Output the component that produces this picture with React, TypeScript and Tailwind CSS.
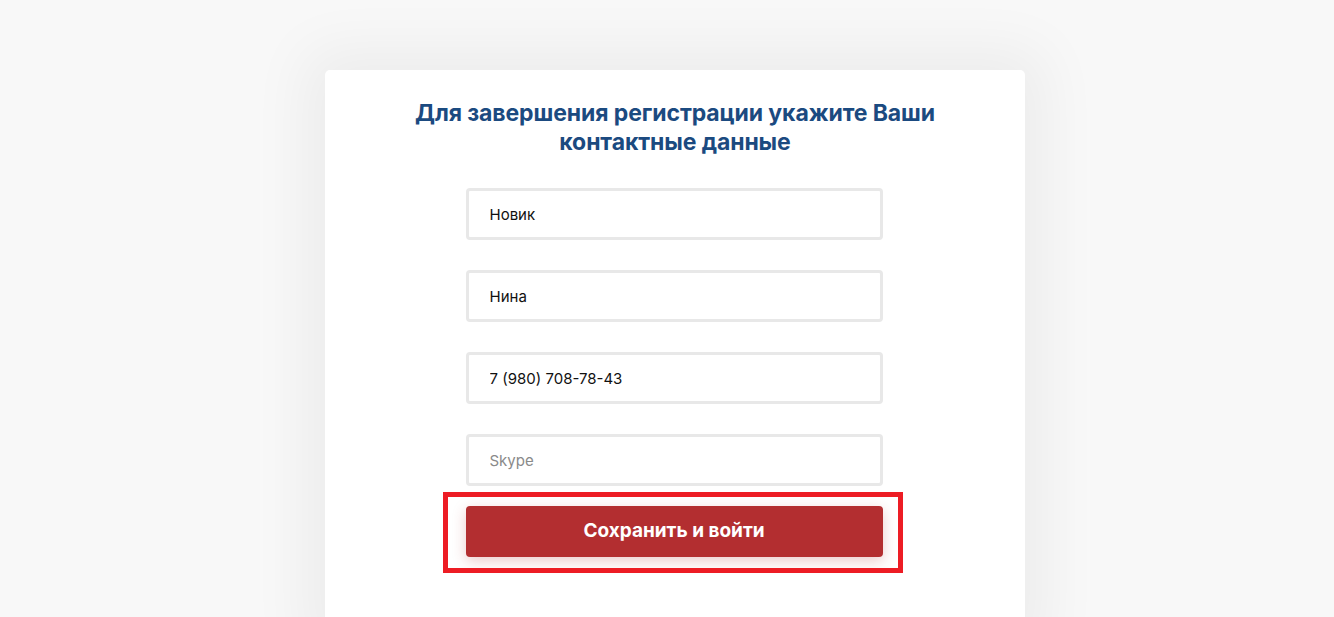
export default function App() {
  const fields = [
    { value: "Новик", placeholder: "Фамилия" },
    { value: "Нина", placeholder: "Имя" },
    { value: "7 (980) 708-78-43", placeholder: "Телефон" },
    { value: "", placeholder: "Skype" },
  ];

  return (
    <div className="flex min-h-screen justify-center bg-[#f8f8f8] pl-[16px] pt-[70px] font-['Inter','Open_Sans',sans-serif]">
      <div className="h-[570px] w-[700px] rounded-[5px] bg-white pt-[29px] shadow-[0_0_60px_20px_rgba(0,0,0,0.05)]">
        <h1 className="mx-auto w-[580px] text-center text-[23px] font-bold leading-[29px] tracking-[-0.1px] text-[#1b4a80]">
          Для завершения регистрации укажите Ваши контактные данные
        </h1>

        <form className="mx-auto mt-[31px] flex w-[417px] -translate-x-[1px] flex-col" onSubmit={(e) => e.preventDefault()}>
          <div className="flex flex-col gap-[30px]">
            {fields.map((f, i) => (
              <input
                key={i}
                defaultValue={f.value}
                placeholder={f.placeholder}
                className="h-[52px] w-full rounded-[4px] border-[3px] border-[#e8e8e8] bg-white px-[21px] text-[15px] text-[#111] outline-none placeholder:text-[#8a8a8a]"
              />
            ))}
          </div>

          <div className="relative mt-[20px]">
            <button
              type="submit"
              className="h-[51px] w-full rounded-[4px] bg-[#b32e30] text-[19px] font-bold text-white shadow-[0_4px_14px_rgba(179,46,48,0.25)]"
            >
              Сохранить и войти
            </button>
            {/* annotation frame */}
            <div className="pointer-events-none absolute -left-[23px] -right-[20px] -top-[14px] -bottom-[16px] border-[5px] border-[#ed1c24]" />
          </div>
        </form>
      </div>
    </div>
  );
}
